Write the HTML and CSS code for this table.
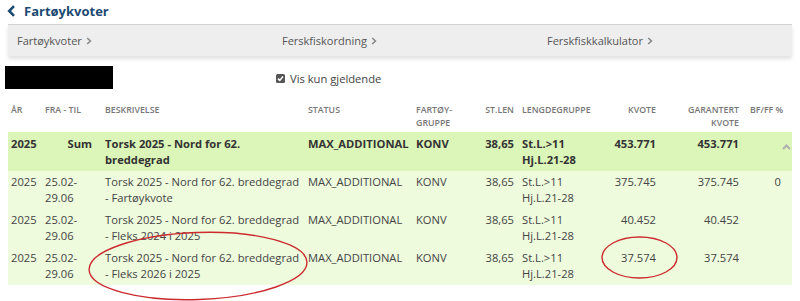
FILE: index.html
```html
<!DOCTYPE html>
<html lang="no">
<head>
<meta charset="utf-8">
<link rel="stylesheet" href="styles.css">
</head>
<body>
<div class="page">
  <h1 class="title">
    <svg class="back" width="9" height="12" viewBox="0 0 9 12"><polyline points="7,1.2 2.2,6 7,10.8" fill="none" stroke="#1c4a72" stroke-width="2.6"/></svg>
    Fartøykvoter
  </h1>
  <nav class="tabs">
    <div class="tab t1">Fartøykvoter <span class="chev"><svg width="6" height="8" viewBox="0 0 6 8"><polyline points="1.2,1 4.4,4 1.2,7" fill="none" stroke="#8a8a8a" stroke-width="1.6"/></svg></span></div>
    <div class="tab t2">Ferskfiskordning <span class="chev"><svg width="6" height="8" viewBox="0 0 6 8"><polyline points="1.2,1 4.4,4 1.2,7" fill="none" stroke="#8a8a8a" stroke-width="1.6"/></svg></span></div>
    <div class="tab t3">Ferskfiskkalkulator <span class="chev"><svg width="6" height="8" viewBox="0 0 6 8"><polyline points="1.2,1 4.4,4 1.2,7" fill="none" stroke="#8a8a8a" stroke-width="1.6"/></svg></span></div>
  </nav>
  <div class="toolbar">
    <div class="redacted"></div>
    <label class="check"><span class="box"><svg width="9" height="9" viewBox="0 0 9 9"><polyline points="2,4.6 3.8,6.4 7,2.6" fill="none" stroke="#fff" stroke-width="1.5"/></svg></span>Vis kun gjeldende</label>
  </div>
  <div class="tablewrap">
    <table class="quota">
      <colgroup>
        <col style="width:33px"><col style="width:60px"><col style="width:203px"><col style="width:108px"><col style="width:68px"><col style="width:38px"><col style="width:82px"><col style="width:60px"><col style="width:83px"><col style="width:39px"><col style="width:10px">
      </colgroup>
      <thead>
        <tr>
          <th class="first">År</th>
          <th>Fra - til</th>
          <th>Beskrivelse</th>
          <th>Status</th>
          <th>Fartøy-gruppe</th>
          <th class="num">St.len</th>
          <th>Lengdegruppe</th>
          <th class="num">Kvote</th>
          <th class="num">Garantert kvote</th>
          <th class="bf">BF/FF %</th>
          <th></th>
        </tr>
      </thead>
      <tbody>
        <tr class="sum">
          <td class="first">2025</td>
          <td class="sumlbl">Sum</td>
          <td>Torsk 2025 - Nord for 62. breddegrad</td>
          <td class="nowrap">MAX_ADDITIONAL</td>
          <td>KONV</td>
          <td class="num">38,65</td>
          <td>St.L.&gt;11 Hj.L.21-28</td>
          <td class="num">453.771</td>
          <td class="num">453.771</td>
          <td class="num bfv"></td>
          <td class="toggle"><svg width="9" height="6" viewBox="0 0 9 6"><polyline points="1,5 4.5,1.5 8,5" fill="none" stroke="#b0b0b0" stroke-width="2"/></svg></td>
        </tr>
        <tr>
          <td class="first">2025</td>
          <td>25.02-29.06</td>
          <td>Torsk 2025 - Nord for 62. breddegrad - Fartøykvote</td>
          <td class="nowrap">MAX_ADDITIONAL</td>
          <td>KONV</td>
          <td class="num">38,65</td>
          <td>St.L.&gt;11 Hj.L.21-28</td>
          <td class="num">375.745</td>
          <td class="num">375.745</td>
          <td class="num bfv">0</td>
          <td></td>
        </tr>
        <tr>
          <td class="first">2025</td>
          <td>25.02-29.06</td>
          <td>Torsk 2025 - Nord for 62. breddegrad - Fleks 2024 i 2025</td>
          <td class="nowrap">MAX_ADDITIONAL</td>
          <td>KONV</td>
          <td class="num">38,65</td>
          <td>St.L.&gt;11 Hj.L.21-28</td>
          <td class="num">40.452</td>
          <td class="num">40.452</td>
          <td class="num bfv"></td>
          <td></td>
        </tr>
        <tr>
          <td class="first">2025</td>
          <td>25.02-29.06</td>
          <td>Torsk 2025 - Nord for 62. breddegrad - Fleks 2026 i 2025</td>
          <td class="nowrap">MAX_ADDITIONAL</td>
          <td>KONV</td>
          <td class="num">38,65</td>
          <td>St.L.&gt;11 Hj.L.21-28</td>
          <td class="num">37.574</td>
          <td class="num">37.574</td>
          <td class="num bfv"></td>
          <td></td>
        </tr>
      </tbody>
    </table>
  </div>
</div>
<svg class="annot" width="800" height="301" viewBox="0 0 800 301">
  <ellipse cx="198" cy="266" rx="109" ry="33.5" transform="rotate(-2 198 266)" fill="none" stroke="#cc2a2e" stroke-width="1.4"/>
  <ellipse cx="639.5" cy="257.5" rx="37.5" ry="20.5" fill="none" stroke="#cc2a2e" stroke-width="1.4"/>
</svg>
</body>
</html>
```
FILE: styles.css
```css
html, body {
  margin: 0;
  padding: 0;
  background: #fff;
}
body {
  font-family: "Open Sans", "DejaVu Sans", sans-serif;
  color: #444;
  width: 800px;
  height: 301px;
  overflow: hidden;
  position: relative;
}
.page {
  padding: 0 8px;
}
.title {
  margin: 0;
  height: 24px;
  display: flex;
  align-items: center;
  gap: 8px;
  font-size: 13px;
  font-weight: 700;
  color: #1c4a72;
  padding-bottom: 2px;
  box-sizing: border-box;
}
.back {
  margin-left: -1px;
}
.tabs {
  display: grid;
  grid-template-columns: 261px 266px 1fr;
  height: 31px;
  align-items: center;
  background: #eeeeee;
  border-top: 1px solid #d2d2d2;
  box-shadow: 0 3px 4px rgba(0,0,0,0.12);
  font-size: 11px;
  color: #555;
}
.tab {
  display: flex;
  align-items: center;
  gap: 4px;
}
.tab.t1 { padding-left: 9px; }
.tab.t2 { padding-left: 13px; }
.tab.t3 { padding-left: 12px; }
.chev {
  display: flex;
  margin-top: 1px;
}
.toolbar {
  display: flex;
  align-items: center;
  height: 40px;
}
.redacted {
  width: 108px;
  height: 23px;
  background: #000;
  margin-left: -3px;
  margin-top: 2px;
}
.check {
  margin-left: 163px;
  display: flex;
  align-items: center;
  gap: 5px;
  font-size: 11.2px;
  color: #444;
  margin-top: 4px;
}
.box {
  width: 9px;
  height: 9px;
  background: #555;
  border-radius: 1.5px;
  display: flex;
}
.quota {
  table-layout: fixed;
  border-collapse: collapse;
  width: 784px;
}
.quota th {
  font-size: 8.8px;
  font-weight: 600;
  color: #777;
  text-transform: uppercase;
  text-align: left;
  vertical-align: top;
  padding: 8px 4px 0 4px;
  height: 28px;
  line-height: 13px;
}
.quota td {
  font-size: 11.2px;
  line-height: 16px;
  vertical-align: top;
  padding: 3px 4px 3px 4px;
  color: #444;
}
.quota tbody tr {
  background: #eefbdd;
}
.quota tbody tr.sum {
  background: #dcf5b8;
}
.quota tbody tr.sum td {
  font-weight: 700;
  color: #333;
  padding-top: 4px;
  padding-bottom: 3px;
}
.quota .first {
  padding-left: 3px;
}
.quota .num {
  text-align: right;
}
.quota th.bf {
  padding-left: 7px;
  padding-right: 0;
  white-space: nowrap;
}
.quota .bfv {
  padding-right: 1px;
}
.quota .sumlbl {
  text-align: right;
  padding-right: 9px;
}
.quota .nowrap {
  white-space: nowrap;
}
.quota tbody tr.sum td.toggle {
  padding: 6px 0 0 0;
}
.annot {
  position: absolute;
  left: 0;
  top: 0;
  pointer-events: none;
}
```
